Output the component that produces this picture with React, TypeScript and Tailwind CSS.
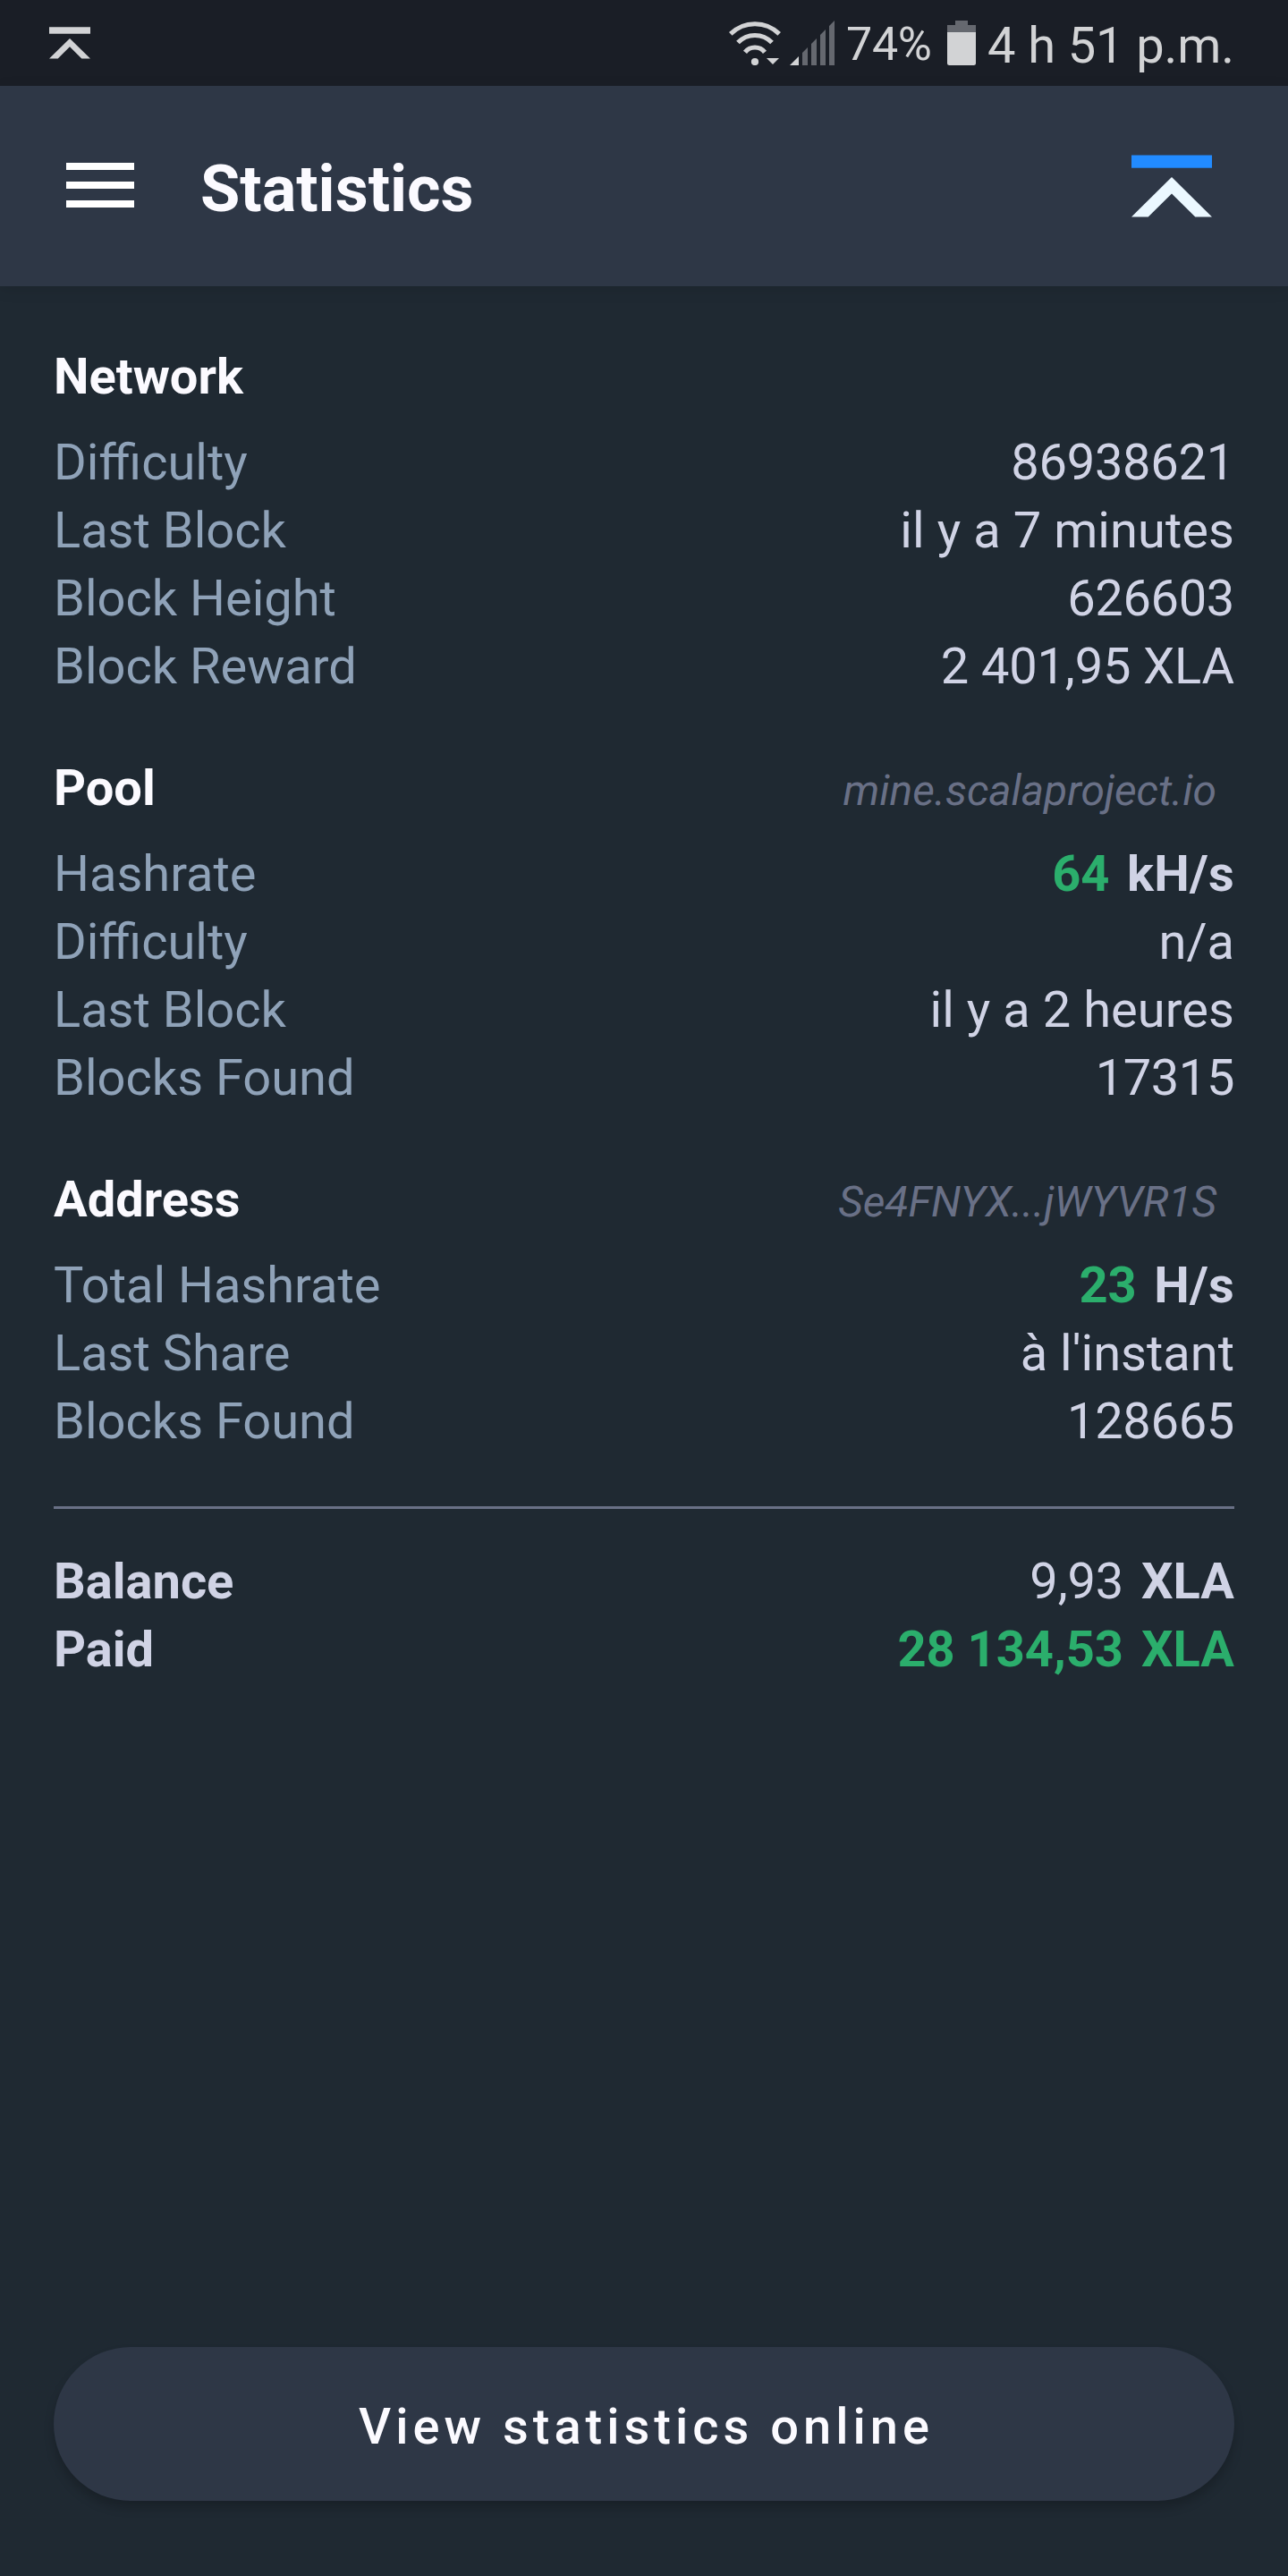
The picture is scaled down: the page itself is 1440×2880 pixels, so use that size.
import type { ReactNode } from "react";

function StatusLogo() {
  return (
    <svg width="46" height="36" viewBox="0 0 46 36" fill="#d2d3d5">
      <path d="M0 .3h46v7.5H0zM23 13 46 35.6H36.3L23 22.2 9.7 35.6H0z" />
    </svg>
  );
}

function AppLogo() {
  return (
    <svg width="90" height="70" viewBox="0 0 90 70">
      <path d="M0 .4h90v14.4H0z" fill="#228bff" />
      <path d="M45 25 90 69.5H71.3L45 43.5 18.7 69.5H0z" fill="#ebf8ff" />
    </svg>
  );
}

function WifiIcon() {
  return (
    <svg width="58" height="50" viewBox="815 23 58 50" fill="none" stroke="#d2d3d5" strokeWidth="5.1">
      <path d="M816.8 37.900a38.6 38.6 0 0 1 54.4 0" />
      <path d="M825 47.600a26.2 26.2 0 0 1 38 0" />
      <path d="M833 58.300a14 14 0 0 1 22 0" />
      <circle cx="844" cy="69" r="4.1" fill="#d2d3d5" stroke="none" />
      <path d="M857 65h14l-7 7z" fill="#d2d3d5" stroke="none" />
    </svg>
  );
}

function SignalIcon() {
  return (
    <svg width="50" height="50" viewBox="0 0 50 50" fill="#65686f">
      <path d="M0 50 10 40V50z" fill="#d2d3d5" />
      <path d="M14 36l6-6v20h-6zM24 26l6-6v30h-6zM34 16l6-6v40h-6zM44 6l6-6v50h-6z" />
    </svg>
  );
}

function BatteryIcon() {
  return (
    <svg width="32" height="50" viewBox="0 0 32 50">
      <path d="M9 0h14v5h9v8H0V5h9z" fill="#65686f" />
      <path d="M0 13h32v34.500a2.500 2.500 0 0 1-2.500 2.500h-27A2.500 2.500 0 0 1 0 47.500z" fill="#d2d3d5" />
    </svg>
  );
}

function StatusBar() {
  return (
    <div className="flex h-24 items-start bg-[#1a1e26] pl-[55px] text-[#d2d3d5]">
      <div className="pt-[30px]">
        <StatusLogo />
      </div>
      <div className="ml-auto flex gap-2.5 pt-[23px]">
        <WifiIcon />
        <SignalIcon />
      </div>
      <div className="w-[126px] pt-[19px] pl-[13px] text-[52px] leading-[62px] tracking-[-0.3px]">74%</div>
      <div className="pt-[23px]">
        <BatteryIcon />
      </div>
      <div className="w-[349px] pt-[13px] pl-[13px] text-[56px] leading-[76px] tracking-[-0.1px] whitespace-nowrap">
        4 h 51 p.m.
      </div>
    </div>
  );
}

function Toolbar() {
  return (
    <header className="flex h-56 items-start bg-[#2e3746] pr-[85px] pl-[74px] shadow-[0_4px_16px_rgba(0,0,0,0.1)]">
      <div className="mt-[86px] flex w-[76px] flex-col gap-[13px]">
        <span className="h-2 bg-white" />
        <span className="h-2 bg-white" />
        <span className="h-2 bg-white" />
      </div>
      <h1 className="mt-[66px] ml-[74px] text-[72px] leading-[100px] font-bold text-[#fbfaff]">Statistics</h1>
      <div className="mt-[77px] ml-auto">
        <AppLogo />
      </div>
    </header>
  );
}

function Row({ label, children, strong = false }: { label: string; children: ReactNode; strong?: boolean }) {
  return (
    <div className="flex h-[76px] justify-between">
      <span className={strong ? "font-bold text-[#d0d3e5]" : "text-[#8fa2b8]"}>{label}</span>
      <span className="flex text-[#d0d3e5]">{children}</span>
    </div>
  );
}

function Section({ title, note, children }: { title: string; note?: string; children: ReactNode }) {
  return (
    <section>
      <div className="mb-5 flex h-[76px] items-baseline justify-between">
        <h2 className="font-bold text-[#fbfaff]">{title}</h2>
        {note && (
          <span className="pr-5 text-[48px] leading-[60px] tracking-[-0.07px] text-[#697086] italic">{note}</span>
        )}
      </div>
      {children}
    </section>
  );
}

export default function App() {
  return (
    <div className="flex h-[2880px] w-[1440px] flex-col bg-[#1f2932] font-['Roboto',sans-serif]">
      <StatusBar />
      <Toolbar />
      <main className="flex flex-1 flex-col px-[60px] pt-[63px] pb-[84px] text-[56px] leading-[76px]">
        <div className="flex flex-col gap-[60px]">
          <Section title="Network">
            <Row label="Difficulty">
              <span className="tracking-[-0.25px]">86938621</span>
            </Row>
            <Row label="Last Block">
              <span className="tracking-[0.06px]">il y a 7 minutes</span>
            </Row>
            <Row label="Block Height">
              <span className="tracking-[-0.35px]">626603</span>
            </Row>
            <Row label="Block Reward">
              <span className="tracking-[-0.15px]">2 401,95 XLA</span>
            </Row>
          </Section>
          <Section title="Pool" note="mine.scalaproject.io">
            <Row label="Hashrate">
              <b className="mr-[19.5px] font-bold text-[#2bae6c]">64</b>
              <b className="font-bold tracking-[0.25px]">kH/s</b>
            </Row>
            <Row label="Difficulty">n/a</Row>
            <Row label="Last Block">
              <span className="tracking-[0.05px]">il y a 2 heures</span>
            </Row>
            <Row label="Blocks Found">
              <span className="tracking-[-0.4px]">17315</span>
            </Row>
          </Section>
          <Section title="Address" note="Se4FNYX...jWYVR1S">
            <Row label="Total Hashrate">
              <b className="mr-[19.5px] font-bold text-[#2bae6c]">23</b>
              <b className="font-bold tracking-[0.25px]">H/s</b>
            </Row>
            <Row label="Last Share">à l'instant</Row>
            <Row label="Blocks Found">
              <span className="tracking-[-0.3px]">128665</span>
            </Row>
          </Section>
        </div>
        <div className="mt-[57px] mb-[43px] h-[3px] bg-[#697086]" />
        <Row label="Balance" strong>
          <span className="mr-5 tracking-[-0.2px]">9,93</span>
          <b className="font-bold">XLA</b>
        </Row>
        <Row label="Paid" strong>
          <b className="mr-5 font-bold text-[#2bae6c]">28 134,53</b>
          <b className="font-bold text-[#2bae6c]">XLA</b>
        </Row>
        <button className="mt-auto h-[172px] rounded-full bg-[#2e3746] pt-1.5 pl-[5px] font-medium tracking-[5px] text-[#fbfaff] shadow-[0_8px_12px_rgba(0,0,0,0.2)]">
          View statistics online
        </button>
      </main>
    </div>
  );
}
